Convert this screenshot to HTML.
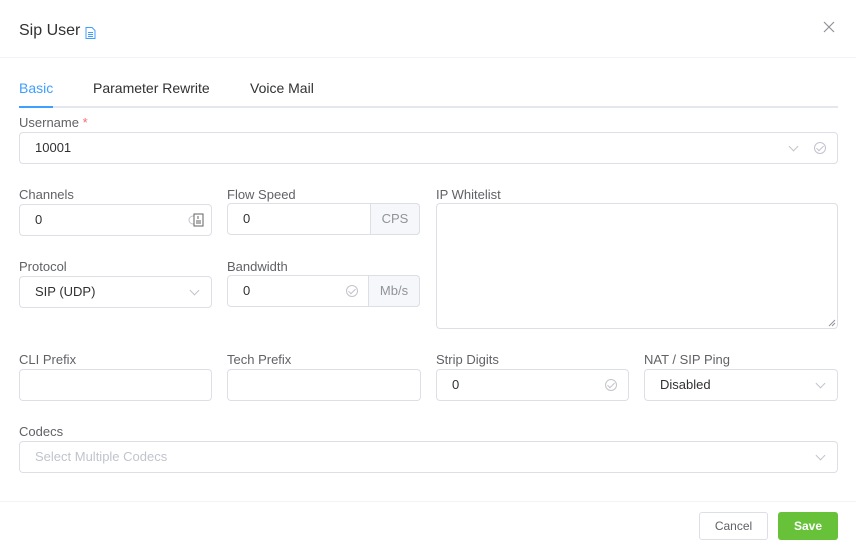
<!DOCTYPE html>
<html><head><meta charset="utf-8"><style>
*{box-sizing:border-box;margin:0;padding:0}
body{width:856px;height:559px;background:#fff;font-family:"Liberation Sans",Arial,sans-serif;position:relative;overflow:hidden;color:#606266}
.a{position:absolute}
.lbl{position:absolute;font-size:13px;color:#606266;line-height:16px}
.in{position:absolute;border:1px solid #dcdfe6;border-radius:4px;height:32px;font-size:13px;color:#606266;line-height:30px;padding-left:15px;background:#fff}
.app{position:absolute;top:-1px;right:-1px;bottom:-1px;background:#f5f7fa;border:1px solid #dcdfe6;border-radius:0 4px 4px 0;color:#909399;text-align:center;font-size:13px;line-height:30px}
.chev{position:absolute;width:7px;height:7px;border-right:1px solid #c0c4cc;border-bottom:1px solid #c0c4cc;transform:rotate(45deg)}
.chk{position:absolute;width:12px;height:12px;border:1px solid #c0c4cc;border-radius:50%}
.chk:after{content:"";position:absolute;left:3px;top:1px;width:3px;height:6px;border-right:1px solid #c0c4cc;border-bottom:1px solid #c0c4cc;transform:rotate(45deg)}
</style></head><body>
<div class="a" style="left:19px;top:21px;font-size:16px;color:#303133;line-height:20px">Sip User</div>
<svg class="a" style="left:85px;top:27px" width="11" height="12" viewBox="0 0 11 12"><path d="M1 .5h6l3 3v8H1z" fill="none" stroke="#409eff"/><path d="M3 5.5h5M3 7.5h5M3 9.5h5" stroke="#409eff"/></svg>
<svg class="a" style="left:823px;top:21px" width="12" height="12"><path d="M1 1l10 10M11 1L1 11" stroke="#909399" stroke-width="1.2"/></svg>
<div class="a" style="left:0;top:57px;width:856px;height:1px;background:#f0f4f8"></div>
<div class="a" style="left:19px;top:80px;font-size:14px;color:#409eff;line-height:16px">Basic</div>
<div class="a" style="left:93px;top:80px;font-size:14px;color:#303133;line-height:16px">Parameter Rewrite</div>
<div class="a" style="left:250px;top:80px;font-size:14px;color:#303133;line-height:16px">Voice Mail</div>
<div class="a" style="left:19px;top:106px;width:819px;height:2px;background:#e4e7ed"></div>
<div class="a" style="left:19px;top:106px;width:34px;height:2px;background:#409eff"></div>

<div class="lbl" style="left:19px;top:115px">Username <span style="color:#f56c6c">*</span></div>
<div class="in" style="left:19px;top:132px;width:819px;color:#303133">10001<div class="chev" style="right:40px;top:10px"></div><div class="chk" style="right:11px;top:9px"></div></div>

<div class="lbl" style="left:19px;top:187px">Channels</div>
<div class="in" style="left:19px;top:204px;width:193px;color:#303133">0
<svg class="a" style="right:5px;top:7px" width="18" height="16"><circle cx="5" cy="8" r="4" fill="none" stroke="#c0c4cc"/><rect x="6" y="2" width="9" height="12" fill="#fff" stroke="#606266"/><path d="M8 9h5M8 11h5M10 4v3" stroke="#606266"/></svg></div>
<div class="lbl" style="left:227px;top:187px">Flow Speed</div>
<div class="in" style="left:227px;top:203px;width:193px;color:#303133">0<div class="app" style="width:50px">CPS</div></div>
<div class="lbl" style="left:436px;top:187px">IP Whitelist</div>
<div class="in" style="left:436px;top:203px;width:402px;height:126px">
<svg class="a" style="right:1px;bottom:1px" width="8" height="8"><path d="M7 1L1 7M7 4L4 7" stroke="#909399"/></svg></div>

<div class="lbl" style="left:19px;top:259px">Protocol</div>
<div class="in" style="left:19px;top:276px;width:193px;color:#303133">SIP (UDP)<div class="chev" style="right:13px;top:10px"></div></div>
<div class="lbl" style="left:227px;top:259px">Bandwidth</div>
<div class="in" style="left:227px;top:275px;width:193px;color:#303133">0<div class="chk" style="right:61px;top:9px"></div><div class="app" style="width:52px">Mb/s</div></div>

<div class="lbl" style="left:19px;top:352px">CLI Prefix</div>
<div class="in" style="left:19px;top:369px;width:193px"></div>
<div class="lbl" style="left:227px;top:352px">Tech Prefix</div>
<div class="in" style="left:227px;top:369px;width:194px"></div>
<div class="lbl" style="left:436px;top:352px">Strip Digits</div>
<div class="in" style="left:436px;top:369px;width:193px;color:#303133">0<div class="chk" style="right:11px;top:9px"></div></div>
<div class="lbl" style="left:644px;top:352px">NAT / SIP Ping</div>
<div class="in" style="left:644px;top:369px;width:194px;color:#303133">Disabled<div class="chev" style="right:13px;top:10px"></div></div>

<div class="lbl" style="left:19px;top:424px">Codecs</div>
<div class="in" style="left:19px;top:441px;width:819px;color:#c0c4cc">Select Multiple Codecs<div class="chev" style="right:13px;top:10px"></div></div>

<div class="a" style="left:0;top:501px;width:856px;height:1px;background:#f0f4f8"></div>
<div class="a" style="left:699px;top:512px;width:69px;height:28px;border:1px solid #dcdfe6;border-radius:3px;font-size:12px;color:#606266;text-align:center;line-height:26px">Cancel</div>
<div class="a" style="left:778px;top:512px;width:60px;height:28px;background:#67c23a;border-radius:3px;font-size:12px;color:#fff;text-align:center;line-height:28px;font-weight:bold">Save</div>
</body></html>
